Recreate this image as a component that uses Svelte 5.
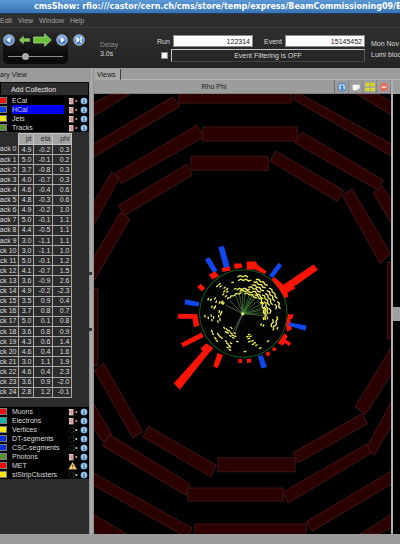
<script>
  const menus = ['Edit', 'View', 'Window', 'Help'];

  const topItems = [
    { name: 'ECal', color: '#e01808', kind: 'calo' },
    { name: 'HCal', color: '#1040e0', kind: 'calo', selected: true },
    { name: 'Jets', color: '#f4e818', kind: 'calo' },
    { name: 'Tracks', color: '#5a9434', kind: 'calo' }
  ];
  const bottomItems = [
    { name: 'Muons', color: '#e81010', kind: 'calo' },
    { name: 'Electrons', color: '#18b0a8', kind: 'calo' },
    { name: 'Vertices', color: '#f4e818', kind: 'plug' },
    { name: 'DT-segments', color: '#1030d8', kind: 'plug' },
    { name: 'CSC-segments', color: '#1030d8', kind: 'plug' },
    { name: 'Photons', color: '#5a9434', kind: 'calo' },
    { name: 'MET', color: '#e81010', kind: 'warn' },
    { name: 'siStripClusters', color: '#f4e818', kind: 'plug' }
  ];

  const tracks = [
    ['4.9', '-0.2', '0.3'], ['5.0', '-0.1', '0.2'], ['3.7', '-0.8', '0.3'],
    ['4.0', '-0.7', '0.3'], ['4.6', '-0.4', '0.6'], ['4.8', '-0.3', '0.6'],
    ['4.9', '-0.2', '1.0'], ['5.0', '-0.1', '1.1'], ['4.4', '-0.5', '1.1'],
    ['3.0', '-1.1', '1.1'], ['3.0', '-1.1', '1.0'], ['5.0', '-0.1', '1.2'],
    ['4.1', '-0.7', '1.5'], ['3.6', '-0.9', '2.6'], ['4.9', '-0.2', '-2.3'],
    ['3.5', '0.9', '0.4'], ['3.7', '0.8', '0.7'], ['5.0', '0.1', '0.8'],
    ['3.6', '0.8', '0.9'], ['4.3', '0.6', '1.4'], ['4.6', '0.4', '1.6'],
    ['3.0', '1.1', '1.9'], ['4.6', '0.4', '2.3'], ['3.6', '0.9', '-2.0'],
    ['2.8', '1.2', '-0.1']
  ];

  const chambers = [
    '94,103 112,94 130,94 94,116',
    '94,144 173,97 180,106 94,157',
    '179,90 291,90 291,103 179,103',
    '116,173 197,125 204,137 122,183',
    '203,127 297,127 297,141 203,141',
    '119,205 187,164 192,175 125,215',
    '191,156 268,156 268,170 191,170',
    '112,172 119,179 94,225 94,202',
    '121,212 130,219 94,281 94,257',
    '90,288 98,288 98,365 90,365',
    '300,94 391,144 391,156 293,99 295,94',
    '357,94 377,94 391,102 391,115',
    '302,132 383,180 378,190 295,143',
    '276,151 343,190 337,201 270,161',
    '382,186 395,206 395,229 373,193',
    '352,189 390,253 380,263 342,195',
    '387,262 395,262 395,338 387,338',
    '104,363 143,431 133,437 95,370',
    '90,396 112,434 103,441 90,421',
    '149,426 216,464 211,476 143,436',
    '110,434 190,483 186,494 103,445',
    '90,470 192,527 188,537 90,482',
    '90,511 132,536 100,536 90,526',
    '218,457 295,457 295,471 218,471',
    '188,487 283,487 283,500 188,500',
    '195,523 306,523 306,537 195,537',
    '395,340 395,367 365,414 355,406',
    '362,413 367,423 298,462 293,452',
    '395,394 395,418 374,454 366,447',
    '367,443 370,453 288,502 283,491',
    '395,468 395,481 312,530 306,521',
    '395,511 395,525 378,533 360,533'
  ];

  const redTowers = [
    '430,87 443,103 370,155 378,158 352,172 355,183 345,188 325,158 305,132 312,125 340,148',
    '230,78 258,78 262,88 290,108 284,116 255,102 230,102',
    '192,84 215,84 217,97 194,101',
    '155,97 180,93 182,105 158,110',
    '117,118 135,107 147,122 127,132',
    '82,155 92,145 106,158 96,168',
    '25,235 82,236 88,270 72,275 68,250 25,250',
    '33,323 95,291 101,304 40,335',
    '12,443 98,347 92,338 110,323 130,338 112,358 30,462',
    '143,352 159,358 143,398 130,392',
    '205,370 216,370 216,382 205,382',
    '231,370 243,369 243,381 231,382',
    '286,352 296,347 301,358 291,362',
    '306,337 315,334 319,344 309,347',
    '323,323 343,293 353,302 347,312 363,322 357,332 345,322 337,330',
    '354,236 370,236 367,250 360,252 365,282 350,288 348,268'
  ];
  const blueTowers = [
    '145,36 162,32 179,93 162,97',
    '105,72 119,66 143,106 129,111',
    '325,82 336,91 308,128 297,121',
    '46,191 88,200 86,213 44,207',
    '358,261 409,270 406,286 356,271',
    '264,361 277,358 291,394 274,399'
  ];

  // Silicon layers: radius, first and last angle in degrees.
  const layers = [
    [113, -98, -78], [112, -69, -6], [102, -98, -4], [92, -72, -8], [83, -78, 4],
    [75, -104, 18], [69, -98, 24], [62, -130, -44], [64, -34, 22], [93, 10, 28], [104, 4, 26]
  ];
  const scattered = [
    [115, 191], [123, 193], [135, 189], [139, 199], [149, 201], [157, 199], [161, 204], [126, 214],
    [133, 218], [136, 213], [105, 242], [115, 247], [124, 240], [131, 246], [126, 254], [148, 228],
    [152, 236], [146, 242], [150, 252], [144, 258], [155, 230], [142, 152], [149, 146], [152, 153],
    [164, 157], [163, 168], [172, 169], [160, 177], [168, 182], [174, 188], [171, 161], [188, 141],
    [196, 160], [126, 287], [129, 295], [144, 296], [149, 302], [155, 307], [136, 308], [141, 316],
    [163, 277], [171, 282], [178, 286], [184, 293], [188, 299], [181, 301], [173, 291], [168, 290],
    [194, 293], [184, 277], [196, 302], [190, 307], [168, 317], [172, 324], [177, 329], [183, 323],
    [180, 334], [173, 336], [180, 343], [202, 318], [225, 348], [232, 303], [237, 297], [242, 302],
    [236, 309], [238, 318], [247, 316], [254, 322], [259, 329], [249, 326], [271, 337], [294, 317],
    [273, 267], [280, 270], [310, 274], [322, 278], [310, 281]
  ];

  const cx = 218;
  const cy = 235;

  function layerPath([r, from, to]) {
    let d = '';
    let k = 0;
    for (let x = from; x < to; x += 460 / r) {
      const a = (x * Math.PI) / 180;
      const rr = r + (k % 2 ? 2 : -2);
      const px = cx + rr * Math.cos(a);
      const py = cy + rr * Math.sin(a);
      d += `${k % 6 === 0 ? 'M' : 'L'}${px.toFixed(1)} ${py.toFixed(1)}`;
      k++;
    }
    return d;
  }

  function hitPath([x, y]) {
    const t = Math.atan2(y - cy, x - cx) + Math.PI / 2;
    const dx = 4 * Math.cos(t);
    const dy = 4 * Math.sin(t);
    return `M${(x - dx).toFixed(1)} ${(y - dy).toFixed(1)}l${(2 * dx).toFixed(1)} ${(2 * dy).toFixed(1)}`;
  }

  const hits = layers.map(layerPath).join('') + scattered.map(hitPath).join('');
  const greenTracks = [[218, 160], [228, 158], [242, 168], [252, 172], [262, 178], [270, 190], [280, 202], [286, 214], [284, 232], [256, 180], [248, 176]];
  const greyTracks = [[166, 208], [180, 196], [196, 178], [207, 170], [196, 288], [188, 290], [284, 222], [286, 240]];
</script>

{#snippet info()}
  <svg class="dot" viewBox="0 0 18 18" aria-hidden="true">
    <circle cx="9" cy="9" r="8" fill="#3c78b4" />
    <circle cx="9" cy="9" r="6.5" fill="#a8cde8" />
    <path d="M9 4v2M7 8h2.500v5M7 13h5" stroke="#245c98" stroke-width="2" fill="none" />
  </svg>
{/snippet}

{#snippet list(items)}
  <ul class="list">
    {#each items as item}
      <li>
        <i class="swatch" style:background={item.color}></i>
        <span class="name" class:selected={item.selected}>{item.name}</span>
        <svg class="kind" viewBox="0 0 30 24" aria-hidden="true">
          {#if item.kind === 'calo'}
            <path d="M3 3H17V22H3Z" fill="#e8dcd8" />
            <path d="M3 9H11M3 15H11M12 4V21" stroke="#a04840" stroke-width="2" />
            <path d="M17 3V22" stroke="#7a2020" stroke-width="2" />
            <circle cx="25" cy="12" r="3" fill="#f0a8a0" />
          {:else if item.kind === 'plug'}
            <path d="M17 4H8L3 9V16L8 21H17V4M17 8H21M17 17H21" fill="none" stroke="#345034" stroke-width="2" stroke-dasharray="4 2" />
            <circle cx="25" cy="12" r="3" fill="#c0dcb8" />
          {:else}
            <path d="M14 1L26 22H2Z" fill="#f8dc90" stroke="#c88828" stroke-width="1.500" />
            <path d="M14 8V15M14 17V20" stroke="#704010" stroke-width="3" />
          {/if}
        </svg>
        {@render info()}
      </li>
    {/each}
  </ul>
{/snippet}

{#snippet ball(shape)}
  <svg class="ball" viewBox="0 0 36 36" aria-hidden="true">
    <circle cx="18" cy="18" r="17" fill="#b8cce4" />
    <circle cx="18" cy="18" r="14" fill="#4a80c4" />
    <path d="M6 16A12 12 0 0 1 30 16Q18 20 6 16Z" fill="#7ca8dc" />
    <path d={shape} fill="#fff" />
  </svg>
{/snippet}

<div class="app">
  <header class="title">cmsShow: rfio:///castor/cern.ch/cms/store/temp/express/BeamCommissioning09/Express</header>

  <nav class="menu">
    {#each menus as m}<button>{m}</button>{/each}
  </nav>

  <section class="toolbar">
    <div class="player">
      <div class="transport">
        <button aria-label="Previous event">{@render ball('M22 9V27L10 18Z')}</button>
        <button aria-label="Play backward">
          <svg class="back" viewBox="0 0 33 30"><path d="M1 15L13 4V11H32V19H13V26Z" fill="#7cc848" stroke="#b8e898" stroke-width="1.500" /></svg>
        </button>
        <button aria-label="Play forward">
          <svg class="forward" viewBox="0 0 57 42"><path d="M2 12H35V2L55 21L35 40V30H2Z" fill="#6cc040" stroke="#b0e890" stroke-width="2" /></svg>
        </button>
        <button aria-label="Next event">{@render ball('M14 9V27L26 18Z')}</button>
      </div>
      <input class="speed" type="range" min="0" max="100" value="29" aria-label="Delay" />
    </div>
    <button class="last" aria-label="Last event">{@render ball('M10 9V27L21 18ZM22 9H26V27H22Z')}</button>
    <div class="delay"><span>Delay</span><b>3.0s</b></div>
    <div class="fields">
      <div class="pair">
        <label for="run">Run</label>
        <input id="run" type="text" value="122314" />
        <label class="event" for="event">Event</label>
        <input id="event" type="text" value="15145452" />
      </div>
      <div class="pair">
        <input class="check" type="checkbox" aria-label="Enable event filtering" />
        <button class="filter">Event Filtering is OFF</button>
      </div>
    </div>
    <div class="meta"><span>Mon Nov</span><span>Lumi bloc</span></div>
  </section>

  <div class="body">
    <aside>
      <h2>ary View</h2>
      <div class="panel">
        <button class="add">Add Collection</button>
        {@render list(topItems)}
        <table>
          <thead>
            <tr><td></td><th>pt</th><th>eta</th><th>phi</th></tr>
          </thead>
          <tbody>
            {#each tracks as row, i}
              <tr>
                <th scope="row"><span>ack {i}</span></th>
                {#each row as v}<td>{v}</td>{/each}
              </tr>
            {/each}
          </tbody>
        </table>
        {@render list(bottomItems)}
      </div>
    </aside>
    <div class="splitter"><i></i><i></i></div>
    <main>
      <div class="tabs"><button>Views</button></div>
      <div class="views">
        <section class="view">
          <div class="viewbar">
            <span>Rho Phi</span>
            <button aria-label="Info">{@render info()}</button>
            <button aria-label="Undock">
              <svg viewBox="0 0 30 30"><path d="M5 8H26V20L20 25H5Z" fill="#f8f8f8" /><path d="M26 20H20V25Z" fill="#8080a0" /></svg>
            </button>
            <button aria-label="Expand">
              <svg viewBox="0 0 30 30"><path d="M1 2H13V13H1ZM17 2H29V13H17ZM1 17H13V28H1ZM17 17H29V28H17Z" fill="#e4e420" /><path d="M5 9L9 5M21 5L25 9M5 21L9 25M21 25L25 21" stroke="#808010" stroke-width="2" /></svg>
            </button>
            <button aria-label="Close">
              <svg viewBox="0 0 30 30"><circle cx="15" cy="15" r="12" fill="#e06c60" /><path d="M8 13H22V17H8Z" fill="#fff0e8" /></svg>
            </button>
          </div>
          <svg class="scene" viewBox="94 94 297 439" preserveAspectRatio="xMidYMid slice" role="img" aria-label="Rho Phi event display">
            {#each chambers as points}<polygon class="chamber" {points} />{/each}
            <g transform="translate(170 235) scale(0.33333)">
              <circle cx="220" cy="234" r="131" fill="#020402" stroke="#185c20" stroke-width="3" />
              {#each redTowers as points}<polygon {points} fill="#fc1404" />{/each}
              {#each blueTowers as points}<polygon {points} fill="#1048f0" />{/each}
              {#each greyTracks as [x, y]}<line x1={cx} y1={cy} x2={x} y2={y} stroke="#6c806c" stroke-width="2" />{/each}
              {#each greenTracks as [x, y]}<line x1={cx} y1={cy} x2={x} y2={y} stroke="#448c38" stroke-width="2" />{/each}
              <path d={hits} stroke="#f0ec5c" stroke-width="4" fill="none" />
              <path d="M151 202L157 196L163 203L156 208Z" fill="#d8e050" />
              <circle cx={cx} cy={cy} r="5" fill="#e0f868" />
            </g>
          </svg>
        </section>
        <div class="divider"></div>
        <div class="side">
          <i class="sidebar-head"></i>
          <i class="black"></i>
          <i class="grey"></i>
          <i class="black"></i>
        </div>
      </div>
    </main>
  </div>
</div>

<style>
  :global(body) { margin: 0; background: #2c2c2c; }
  * { box-sizing: border-box; }
  button { margin: 0; padding: 0; border: 0; background: none; color: inherit; font: inherit; display: block; }
  svg { display: block; }

  .app {
    display: flex;
    flex-direction: column;
    min-height: 100vh;
    overflow: hidden;
    font: 7px/9px "Liberation Sans", Arial, sans-serif;
    color: #dcdcdc;
    background: #2c2c2c;
  }
  .title {
    height: 14px;
    padding-left: 34px;
    overflow: hidden;
    white-space: nowrap;
    font: bold 8px/13px "DejaVu Sans", sans-serif;
    color: #fff;
    background: linear-gradient(#5c98d4, #3874b4);
    border-bottom: 1px solid #1c3c60;
  }
  .menu {
    display: flex;
    gap: 6px;
    height: 14px;
    padding: 2px 0;
    color: #a4a4a4;
    background: #2e2e2e;
    border-bottom: 1px solid #3c3c3c;
  }
  .toolbar {
    display: flex;
    height: 40px;
    overflow: hidden;
    background: linear-gradient(#2e2e2e, #242424);
  }
  .player {
    flex: none;
    width: 65px;
    height: 34px;
    margin: 2px 0 0 3px;
    border-radius: 5px;
    background: linear-gradient(#2c2c2c, #0c0c0c 70%);
  }
  .transport { display: flex; align-items: center; justify-content: space-between; height: 20px; }
  .ball { width: 12px; height: 12px; }
  .back { width: 11px; height: 10px; }
  .forward { width: 19px; height: 14px; }
  .speed { appearance: none; display: block; width: 55px; height: 9px; margin: 2px 5px; background: none; }
  .speed::-webkit-slider-runnable-track { height: 1px; background: #8c8c8c; }
  .speed::-webkit-slider-thumb { appearance: none; width: 7px; height: 7px; margin-top: -3px; border-radius: 50%; background: #a8a8a8; }
  .last { flex: none; height: 20px; margin: 2px 0 0 5px; }
  .delay { flex: none; display: flex; flex-direction: column; width: 72px; padding: 12px 0 0 15px; color: #8c8c8c; }
  .delay b { font-weight: normal; color: #dcdcdc; }
  .fields { flex: 1; min-width: 0; display: flex; flex-direction: column; gap: 2px; padding-top: 7px; }
  .pair { display: flex; justify-content: flex-end; align-items: center; gap: 3px; height: 12px; }
  .pair .event { margin-left: 8px; }
  .pair input[type="text"] {
    flex: 1;
    min-width: 0;
    height: 12px;
    padding: 0 2px;
    border: 1px solid #888;
    color: #202020;
    background: #fff;
    font: inherit;
    text-align: right;
  }
  .check { appearance: none; width: 7px; height: 7px; margin: 0 0 0 4px; background: #f4f4f4; border: 1px solid #888; }
  .filter { flex: 1; height: 13px; border-top: 1px solid #c8c8c8; border-left: 1px solid #c8c8c8; border-right: 1px solid #555; border-bottom: 1px solid #444; }
  .meta { flex: none; width: 35px; display: flex; flex-direction: column; gap: 2px; padding: 11px 0 0 6px; white-space: nowrap; }

  .body { flex: 1; display: flex; background: #9c9c9c; padding-bottom: 10px; }
  aside { flex: none; width: 89px; display: flex; flex-direction: column; }
  h2 { margin: 0; height: 14px; font: inherit; line-height: 13px; color: #202020; }
  .panel { flex: 1; display: flex; flex-direction: column; background: #2c2c2c; }
  .add { width: 100%; height: 14px; padding-right: 22px; border: 1px solid #080808; text-align: center; color: #e8e8e8; }
  .list { margin: 0; padding: 0; list-style: none; width: 100%; background: #000; }
  .list li { display: flex; align-items: center; height: 9px; padding-right: 1px; }
  .swatch { width: 7px; height: 7px; margin-right: 5px; border: 1px solid #7c7c7c; border-left: 0; }
  .name { flex: 1; height: 9px; line-height: 9px; white-space: nowrap; margin-right: 4px; }
  .selected { background: #0000f4; color: #c8d0ff; }
  .kind { width: 10px; height: 8px; }
  .dot { width: 8px; height: 8px; margin-left: 2px; }
  table {
    width: 71px;
    height: 265px;
    margin: 1px 0 9px;
    border-collapse: collapse;
    table-layout: fixed;
    line-height: 8px;
  }
  td, th { padding: 0 1px 0 0; font-weight: normal; text-align: right; overflow: hidden; white-space: nowrap; }
  tbody td, tbody th { border-right: 1px solid #a8a8a8; border-bottom: 1px solid #a8a8a8; }
  thead td { width: 18px; border: 0; }
  thead th { width: 19px; height: 11px; color: #303030; background: #a4a4a4; border: 1px solid #c4c4c4; }
  thead td + th { width: 15px; }
  tbody th span { display: flex; justify-content: flex-end; }

  .splitter {
    flex: none;
    width: 5px;
    display: flex;
    flex-direction: column;
    justify-content: center;
    gap: 53px;
    background: linear-gradient(90deg, #8c8c8c, #b0b0b0 50%, #8c8c8c);
  }
  .splitter i { width: 3px; height: 3px; background: #383030; }
  main { flex: 1; min-width: 0; display: flex; flex-direction: column; }
  .tabs { height: 12px; padding-top: 1px; border-bottom: 1px solid #b8b8b8; }
  .tabs button { height: 11px; padding: 0 4px 0 3px; color: #202020; background: #a8a8a8; border-right: 1px solid #404040; }
  .views { flex: 1; display: flex; }
  .view { flex: 1; min-width: 0; display: flex; flex-direction: column; }
  .viewbar { display: flex; height: 14px; color: #202020; background: #9c9c9c; border-bottom: 1px solid #808080; }
  .viewbar span { flex: 1; text-align: center; line-height: 14px; border-right: 1px solid #707070; }
  .viewbar button { width: 14px; padding: 2px; border-right: 1px solid #848484; }
  .viewbar svg { width: 10px; height: 10px; margin: 0; }
  .scene { flex: 1; width: 100%; height: 0; min-height: 200px; background: #000; }
  .chamber { fill: #2a0000; stroke: #401414; stroke-width: 1; }
  .divider { width: 2px; background: #b0b0b0; }
  .side { width: 7px; display: flex; flex-direction: column; }
  .sidebar-head { height: 14px; }
  .black { flex: 1; background: #000; }
  .grey { height: 14px; background: #a0a0a0; }
</style>
